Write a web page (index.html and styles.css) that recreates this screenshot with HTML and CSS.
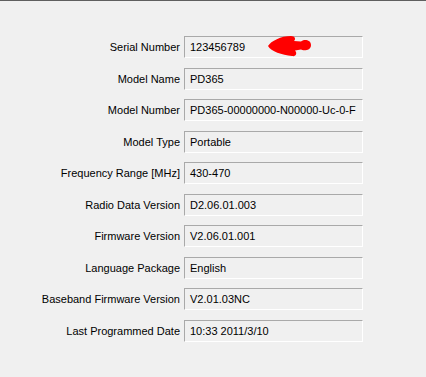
FILE: index.html
```html
<!DOCTYPE html>
<html>
<head>
<meta charset="utf-8">
<link rel="stylesheet" href="styles.css">
</head>
<body>
<div class="panel">
  <div class="form">
    <div class="label">Serial Number</div>
    <div class="field serial">123456789
      <svg class="arrow" width="50" height="26" viewBox="265 33 50 26"><path d="M267,46 C270,41 280,36 290,36 C294,36 295,39 293,41 L300,41.5 C302,39 310,39 310,45 C310,51 302,51 300,49.5 L294,50.5 C296.5,53 295,57 291,56 C281,55 270,51.5 267,46 Z" fill="#ff0000"/></svg>
    </div>
    <div class="label">Model Name</div>
    <div class="field">PD365</div>
    <div class="label">Model Number</div>
    <div class="field">PD365-00000000-N00000-Uc-0-F</div>
    <div class="label">Model Type</div>
    <div class="field">Portable</div>
    <div class="label">Frequency Range [MHz]</div>
    <div class="field">430-470</div>
    <div class="label">Radio Data Version</div>
    <div class="field">D2.06.01.003</div>
    <div class="label">Firmware Version</div>
    <div class="field">V2.06.01.001</div>
    <div class="label">Language Package</div>
    <div class="field">English</div>
    <div class="label">Baseband Firmware Version</div>
    <div class="field">V2.01.03NC</div>
    <div class="label">Last Programmed Date</div>
    <div class="field">10:33 2011/3/10</div>
  </div>
</div>
</body>
</html>
```
FILE: styles.css
```css
html, body {
  margin: 0;
  padding: 0;
  background: #f0f0f0;
}
body {
  font-family: "Liberation Sans", Arial, sans-serif;
  font-size: 11px;
  color: #000;
}
.panel {
  border-top: 1px solid #5f5f5f;
  height: 376px;
  box-sizing: border-box;
  padding-top: 35px;
}
.form {
  display: grid;
  grid-template-columns: 180px 179px;
  column-gap: 4px;
  row-gap: 9.5px;
  grid-auto-rows: 22px;
}
.label {
  text-align: right;
  align-self: center;
  white-space: nowrap;
}
.field {
  position: relative;
  box-sizing: border-box;
  border-top: 1px solid #a9a9a9;
  border-left: 1px solid #a9a9a9;
  border-right: 1px solid #ffffff;
  border-bottom: 1px solid #ffffff;
  padding-left: 5px;
  display: flex;
  align-items: center;
  white-space: nowrap;
}
.arrow {
  position: absolute;
  left: 81px;
  top: -4px;
}
```
